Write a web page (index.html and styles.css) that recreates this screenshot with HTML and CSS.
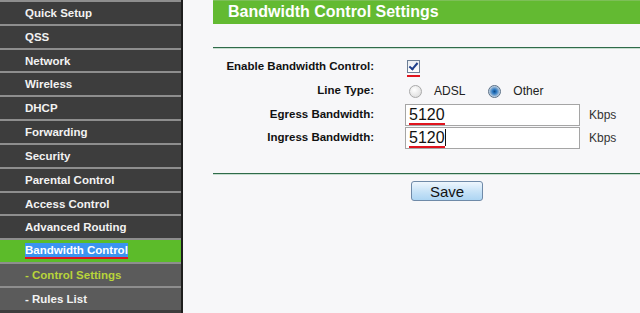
FILE: index.html
```html
<!DOCTYPE html>
<html lang="en">
<head>
  <meta charset="UTF-8">
  <title>Bandwidth Control Settings</title>
  <link rel="stylesheet" href="styles.css">
</head>
<body>
  <nav class="menu">
    <a class="menu-item">Quick Setup</a>
    <a class="menu-item">QSS</a>
    <a class="menu-item">Network</a>
    <a class="menu-item">Wireless</a>
    <a class="menu-item">DHCP</a>
    <a class="menu-item">Forwarding</a>
    <a class="menu-item">Security</a>
    <a class="menu-item">Parental Control</a>
    <a class="menu-item">Access Control</a>
    <a class="menu-item">Advanced Routing</a>
    <a class="menu-item active"><span class="marked">Bandwidth Control</span></a>
    <a class="menu-item sub current">- Control Settings</a>
    <a class="menu-item sub">- Rules List</a>
  </nav>
  <main class="content">
    <h1 class="title">Bandwidth Control Settings</h1>
    <div class="rule"></div>
    <div class="form">
      <label class="label">Enable Bandwidth Control:</label>
      <div class="field"><span class="check-wrap"><span class="check"></span></span></div>

      <label class="label">Line Type:</label>
      <div class="field">
        <span class="radio"></span><span class="opt">ADSL</span>
        <span class="radio on"></span><span class="opt">Other</span>
      </div>

      <label class="label">Egress Bandwidth:</label>
      <div class="field">
        <div class="input"><span class="underlined">5120</span></div>
        <span class="unit">Kbps</span>
      </div>

      <label class="label">Ingress Bandwidth:</label>
      <div class="field">
        <div class="input"><span class="underlined">5120</span><span class="caret"></span></div>
        <span class="unit">Kbps</span>
      </div>
    </div>
    <div class="rule bottom"></div>
    <div class="actions">
      <button class="save">Save</button>
    </div>
  </main>
</body>
</html>
```

FILE: styles.css
```css
body {
  margin: 0;
  height: 313px;
  overflow: hidden;
  display: flex;
  font-family: "Liberation Sans", Arial, sans-serif;
  background: #f7f7f9;
  color: #1c1c1c;
}
.menu {
  width: 181px;
  flex-shrink: 0;
  display: flex;
  flex-direction: column;
  background: #3d3d3d;
  border-right: 2px solid #1e1e1e;
}
.menu-item {
  height: 21.83px;
  border-top: 2px solid #8e8e8e;
  padding-left: 25px;
  display: flex;
  align-items: center;
  font-size: 11.5px;
  font-weight: bold;
  color: #f2f2f2;
}
.menu-item.active {
  background: #5cbb2a;
}
.marked {
  background: #3b93f0;
  color: #fff;
  border-bottom: 2px solid #e0141e;
  line-height: 14px;
}
.menu-item.sub {
  background: #5b5b5b;
}
.menu-item.current {
  color: #b8d43a;
}
.content {
  flex: 1;
  padding-left: 30px;
}
.title {
  margin: 0;
  height: 24px;
  box-sizing: border-box;
  padding-left: 15px;
  background: #63ba32;
  border-top: 1px solid #7dbf58;
  color: #fff;
  font-size: 16px;
  line-height: 22px;
  font-weight: bold;
}
.rule {
  margin-top: 23px;
  height: 1px;
  background: #2f6b4a;
  border-bottom: 1px solid #c7ddd0;
}
.rule.bottom {
  margin-top: 24px;
}
.form {
  display: grid;
  grid-template-columns: 161px 1fr;
  grid-template-rows: 24px 24px 23px 23px;
  column-gap: 31px;
  padding-top: 6px;
}
.label {
  text-align: right;
  font-size: 11.5px;
  font-weight: bold;
  line-height: 23px;
  color: #111;
}
.field {
  display: flex;
  align-items: center;
  font-size: 12px;
}
.check-wrap {
  margin-left: 2px;
  padding-bottom: 2px;
  margin-top: 3px;
  border-bottom: 2px solid #e0141e;
}
.check {
  display: block;
  width: 11px;
  height: 11px;
  border: 1px solid #6d7f96;
  background: linear-gradient(#e9edf2, #fff);
  position: relative;
}
.check::after {
  content: "";
  position: absolute;
  left: 3px;
  top: 0;
  width: 3px;
  height: 7px;
  border: solid #1d3e8a;
  border-width: 0 2px 2px 0;
  transform: rotate(40deg);
}
.radio {
  width: 11px;
  height: 11px;
  margin-left: 4px;
  border-radius: 50%;
  border: 1px solid #a9a9a9;
  background: radial-gradient(circle at 40% 35%, #fff, #d6d6d6);
}
.radio.on {
  margin-left: 0;
  border-color: #5a6f86;
  background: radial-gradient(circle at 50% 50%, #0e4a86 0, #2c79c2 2px, #7fa8d0 4px, #dfe7ef 6px);
}
.opt {
  margin-left: 12px;
  margin-right: 23px;
  color: #222;
}
.input {
  width: 170px;
  height: 20px;
  border: 1px solid #a5a5a5;
  background: #fff;
  display: flex;
  align-items: center;
  padding-left: 3px;
  font-size: 16px;
  color: #111;
  box-sizing: content-box;
}
.underlined {
  line-height: 17px;
  border-bottom: 2px solid #e0141e;
  margin-top: 2px;
}
.caret {
  width: 1px;
  height: 17px;
  background: #111;
}
.unit {
  margin-left: 9px;
  color: #333;
}
.actions {
  padding-left: 198px;
  padding-top: 6px;
}
.save {
  width: 72px;
  height: 20px;
  padding: 0;
  border: 1px solid #6f8aa8;
  border-radius: 3px;
  background: linear-gradient(#eef6fd, #c6e2f7 55%, #add5f3);
  font-family: "Liberation Sans", Arial, sans-serif;
  font-size: 15px;
  color: #111;
}
```
